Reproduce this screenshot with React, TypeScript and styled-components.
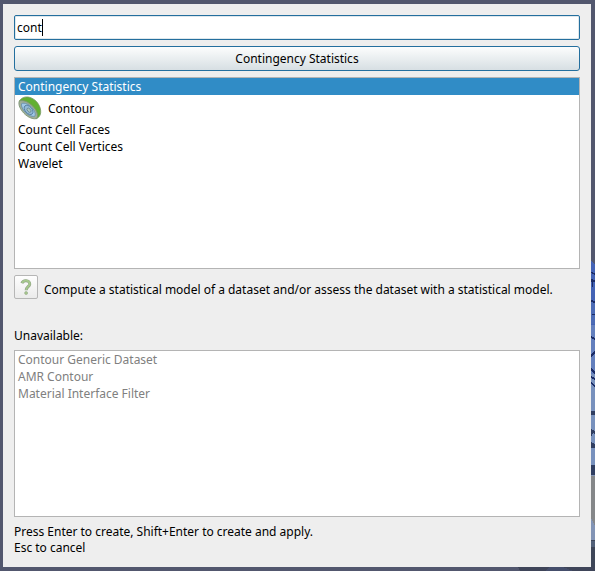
import React from "react";
import styled, { createGlobalStyle } from "styled-components";

const GlobalStyle = createGlobalStyle`
  * { box-sizing: border-box; }
  html, body { margin: 0; padding: 0; }
  body { overflow: hidden; }
`;

const Desktop = styled.div`
  position: relative;
  width: 595px;
  height: 571px;
  padding: 4px 4px 4px 3px;
  background: #52576e;
  font-family: "Noto Sans", sans-serif;
  font-size: 12px;
  line-height: 17px;
  letter-spacing: -0.008px;
  color: #000;
`;

const Scene = styled.svg`
  position: absolute;
  inset: 0;
`;

const Dialog = styled.main`
  position: relative;
  display: flex;
  flex-direction: column;
  width: 588px;
  height: 563px;
  padding: 11px;
  background: #eeeeee;
`;

const SearchField = styled.div`
  display: flex;
  align-items: center;
  height: 25px;
  flex: none;
  padding: 0 2px;
  border: 1px solid #246f9e;
  border-radius: 2px;
  background: #fff;
  box-shadow: inset 0 0 0 1px #dfe8ec;
`;

const Caret = styled.span`
  width: 1px;
  height: 17px;
  background: #000;
`;

const CreateButton = styled.button`
  height: 25px;
  flex: none;
  margin-top: 6px;
  padding: 0;
  border: 1px solid #246f9e;
  border-radius: 3px;
  background: linear-gradient(#fcfdfd, #d7dfe3);
  font: inherit;
  letter-spacing: inherit;
  color: #000;
`;

const List = styled.ul<{ $height: number; $gap: number; $disabled?: boolean }>`
  list-style: none;
  flex: none;
  height: ${(p) => p.$height}px;
  margin: ${(p) => p.$gap}px 0 0;
  padding: 0;
  border: 1px solid #b4b4b4;
  background: #fff;
  color: ${(p) => (p.$disabled ? "#808080" : "#000")};
`;

const Item = styled.li<{ $selected?: boolean; $tall?: boolean }>`
  display: flex;
  align-items: center;
  gap: 6px;
  height: ${(p) => (p.$tall ? 26 : 17)}px;
  padding: 0 3px;
  background: ${(p) => (p.$selected ? "#308cc6" : "transparent")};
  color: ${(p) => (p.$selected ? "#fff" : "inherit")};
`;

const HelpRow = styled.div`
  display: flex;
  flex: none;
  height: 24px;
  margin-top: 6px;
  gap: 6px;
`;

const HelpButton = styled.button`
  display: flex;
  align-items: center;
  justify-content: center;
  width: 24px;
  height: 24px;
  padding: 0;
  border: 1px solid #b6b6b6;
  border-radius: 2px;
  background: linear-gradient(#fefefe, #ebebeb);
`;

const Description = styled.span`
  padding-top: 6px;
  white-space: nowrap;
`;

const Label = styled.div`
  flex: none;
  height: 17px;
  margin-top: 28px;
`;

const Hints = styled.div`
  margin-top: 7px;
  line-height: 16px;
`;

const ContourIcon = () => (
  <svg width="24" height="24" viewBox="0 0 24 24">
    <path d="M1.300 5C3.500 1.500 7.500.2 11.500 1.300 18 3 23.200 10 22.700 16.500c-.1 2.500-1.500 5-4.200 6.200z" fill="#62b032" stroke="#7c9a68" strokeWidth=".8" />
    <path d="M1.200 5.200C4.500 3.300 10.500 5.800 15 10.400c4.200 4.300 5.700 9.500 3.500 12.200-4.500 1-10.300-2.200-14-7C1.300 11.500.3 8 1.200 5.200z" fill="#9fae96" stroke="#7c9474" strokeWidth=".9" />
    <path d="M3.600 7.600c3-1.300 7.400.7 10.500 4.200 2.900 3.200 3.900 6.700 2.500 8.500-3.300.6-7.400-1.700-10.300-5.200-2.300-2.900-3.300-5.600-2.700-7.500z" fill="#a2c8e6" stroke="#6991ad" strokeWidth=".9" />
    <ellipse cx="10.600" cy="13.900" rx="5.400" ry="3.400" transform="rotate(48 10.600 13.900)" fill="#94bad6" stroke="#56809d" strokeWidth=".9" />
    <ellipse cx="11" cy="14.200" rx="2.500" ry="1.500" transform="rotate(48 11 14.200)" fill="#a9c5bd" stroke="#64868d" strokeWidth=".8" />
  </svg>
);

const HelpIcon = () => (
  <svg width="16" height="18" viewBox="0 0 16 18">
    <path d="M3.900 5.200C4.500 3.500 6 2.600 8 2.700c2.500.1 3.900 1.500 3.700 3.500C11.400 8.600 8.300 9 8.200 12.200" fill="none" stroke="#93a688" strokeWidth="3" />
    <path d="M4.200 5C4.800 3.500 6 2.600 8 2.700c2.500.1 3.900 1.500 3.700 3.500C11.400 8.600 8.300 9 8.200 11.900" fill="none" stroke="#a6c98c" strokeWidth="1.800" />
    <circle cx="8.100" cy="15" r="1.500" fill="#a6c98c" stroke="#93a688" strokeWidth=".6" />
  </svg>
);

const SceneEdge = () => (
  <Scene width="595" height="571" shapeRendering="crispEdges">
    <path d="M591 261l4 3v62h-4z" fill="#4463b5" />
    <path d="M591 302h4v22h-4z" fill="#4c6bb5" />
    <path d="M591 325h4v49h-4z" fill="#637fbd" />
    <path d="M591 374h4v98h-4z" fill="#7891bd" />
    <path d="M591 272l4 1v2l-4-2zM591 279l4 1v2h-2v5h-1v-5h-1zM591 300l4 1v2l-4-1zM592 314h3v1h-3zM591 336l4 2v2l-4-2zM591 354l4-3v2l-4 4zM591 368l4 3v3l-4-3zM591 376l4 2v2l-4-2zM591 382l4 3v2l-4-3z" fill="#1b2b65" />
    <path d="M591 411h4v4h-4zM591 429l4 2v3l-2-1-2 4zM591 442l4 2v4h-4zM591 465h4v10h-4z" fill="#303e61" />
    <path d="M591 475h4v67h-4z" fill="#858789" />
    <path d="M591 475h4v1h-4zM591 518l4 8v15h-4z" fill="#8294b5" />
    <path d="M591 540h4v31h-4z" fill="#3e4658" />
    <path d="M591 541h4v6h-4z" fill="#526078" />
    <path d="M518 567h77v4h-75z" fill="#3f4559" />
    <path d="M549 567h14l10 4h-27z" fill="#454e6b" />
  </Scene>
);

const matches = ["Count Cell Faces", "Count Cell Vertices", "Wavelet"];
const unavailable = ["Contour Generic Dataset", "AMR Contour", "Material Interface Filter"];

export default function App() {
  return (
    <Desktop>
      <GlobalStyle />
      <SceneEdge />
      <Dialog>
        <SearchField>cont<Caret /></SearchField>
        <CreateButton>Contingency Statistics</CreateButton>
        <List $height={192} $gap={6}>
          <Item $selected>Contingency Statistics</Item>
          <Item $tall><ContourIcon />Contour</Item>
          {matches.map((name) => <Item key={name}>{name}</Item>)}
        </List>
        <HelpRow>
          <HelpButton aria-label="Help"><HelpIcon /></HelpButton>
          <Description>
            Compute a statistical model of a dataset and/or assess the dataset with a statistical model.
          </Description>
        </HelpRow>
        <Label>Unavailable:</Label>
        <List $height={167} $gap={6} $disabled>
          {unavailable.map((name) => <Item key={name}>{name}</Item>)}
        </List>
        <Hints>
          Press Enter to create, Shift+Enter to create and apply.<br />
          Esc to cancel
        </Hints>
      </Dialog>
    </Desktop>
  );
}
